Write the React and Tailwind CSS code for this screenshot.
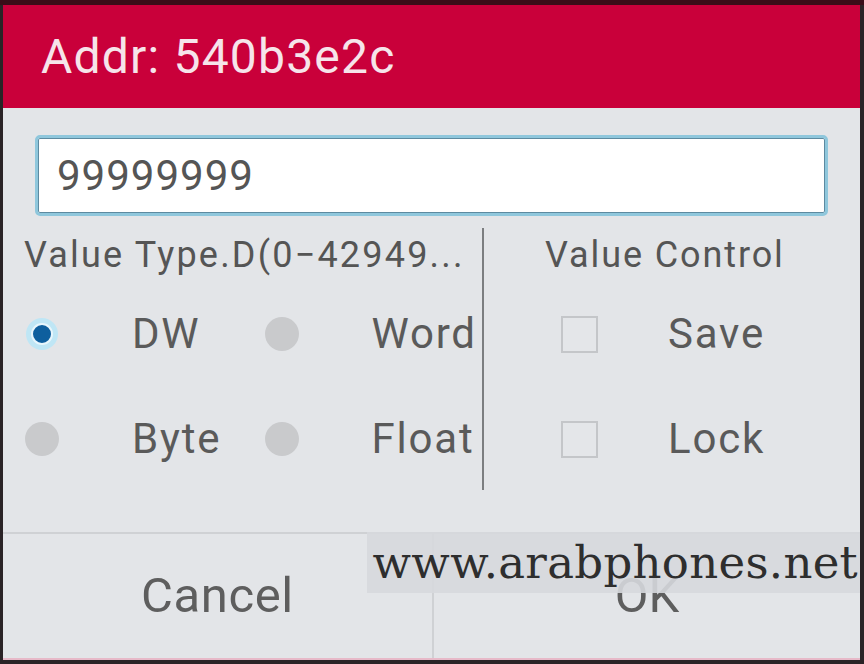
const font = { fontFamily: "Roboto, 'Liberation Sans', sans-serif" };

function Radio({ on }) {
  if (on) {
    return (
      <span className="flex h-[32px] w-[32px] items-center justify-center rounded-full bg-[#bfe6f5]">
        <span className="h-[22px] w-[22px] rounded-full border-[2px] border-[#e8f6fc] bg-[#0e5f9e]" />
      </span>
    );
  }
  return <span className="h-[34px] w-[34px] rounded-full bg-[#c9cacc]" />;
}

function Check() {
  return <span className="h-[37px] w-[37px] border-[2px] border-[#c4c6c9] bg-[#e4e6e9]" />;
}

function RadioCell({ on, label }) {
  return (
    <div className="flex w-[242px] items-center">
      <div className="flex w-[78px] justify-center">
        <Radio on={on} />
      </div>
      <span className="pl-[51px] text-[42px] leading-none tracking-[1.8px] text-[#5a5a5a]">{label}</span>
    </div>
  );
}

export default function App() {
  return (
    <div className="relative h-[664px] w-[864px] overflow-hidden bg-[#2a2326]" style={font}>
      <div className="h-[5px] bg-[#3a0d18]" />
      <div className="ml-[3px] flex w-[857px] flex-col">
        <div className="flex h-[103px] items-center bg-[#c9003a] pl-[38px]">
          <span className="text-[48px] leading-none tracking-[1.2px] text-[#f6e4ea]">Addr: 540b3e2c</span>
        </div>
        <div className="flex flex-col bg-[#e3e5e8]">
          <div className="px-[32px] pt-[27px]">
            <div className="flex h-[81px] items-center rounded-[5px] border-[3px] border-[#8fc7dc] bg-white pl-[19px] shadow-[inset_0_0_0_1px_#5d8aa0]">
              <span className="text-[42px] leading-none tracking-[1px] text-[#555]">99999999</span>
            </div>
          </div>
          <div className="flex h-[316px]">
            <div className="flex w-[479px] flex-col">
              <div className="flex h-[78px] items-center pl-[21px]">
                <span className="text-[36px] leading-none tracking-[2.2px] text-[#555]">Value Type.D(0−42949...</span>
              </div>
              <div className="flex h-[80px] items-center">
                <RadioCell on label="DW" />
                <RadioCell label="Word" />
              </div>
              <div className="flex h-[130px] items-center">
                <RadioCell label="Byte" />
                <RadioCell label="Float" />
              </div>
            </div>
            <div className="mt-[12px] h-[262px] w-[2px] bg-[#7c7e80]" />
            <div className="flex flex-1 flex-col">
              <div className="flex h-[78px] items-center pl-[61px]">
                <span className="text-[36px] leading-none tracking-[1.9px] text-[#555]">Value Control</span>
              </div>
              <div className="flex h-[80px] items-center pl-[77px]">
                <Check />
                <span className="pl-[70px] text-[42px] leading-none tracking-[1.8px] text-[#5a5a5a]">Save</span>
              </div>
              <div className="flex h-[130px] items-center pl-[77px]">
                <Check />
                <span className="pl-[70px] text-[42px] leading-none tracking-[1.8px] text-[#5a5a5a]">Lock</span>
              </div>
            </div>
          </div>
          <div className="flex h-[126px] border-t-[2px] border-[#cfd1d4]">
            <div className="flex w-[429px] items-center justify-center pb-[2px]">
              <span className="text-[49px] leading-none tracking-[0.6px] text-[#5e5e5e]">Cancel</span>
            </div>
            <div className="w-[2px] bg-[#cfd1d4]" />
            <div className="flex flex-1 items-center justify-center pb-[2px]">
              <span className="text-[49px] leading-none text-[#5e5e5e]">OK</span>
            </div>
          </div>
        </div>
        <div className="h-[2px] bg-[#e7b9c8]" />
      </div>
      <div
        className="absolute left-[367px] top-[532px] flex h-[61px] w-[493px] items-center justify-end bg-[#d6d8dd]/90 pr-[2px]"
        style={{ fontFamily: "'DejaVu Serif', 'Liberation Serif', serif" }}
      >
        <span className="text-[45px] leading-none tracking-[0.3px] text-[#2e2e2e]">www.arabphones.net</span>
      </div>
    </div>
  );
}
